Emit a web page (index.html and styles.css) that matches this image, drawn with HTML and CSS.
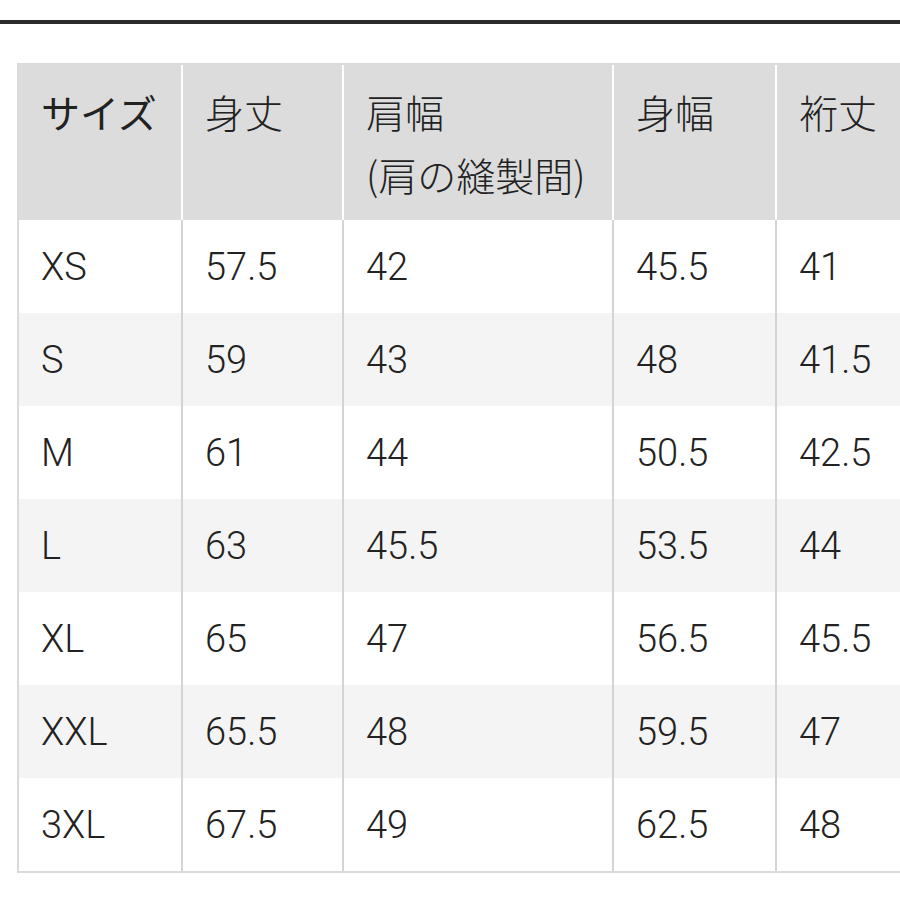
FILE: index.html
```html
<!DOCTYPE html>
<html lang="ja">
<head>
<meta charset="utf-8">
<title>サイズ表</title>
<link rel="stylesheet" href="styles.css">
</head>
<body>
<div class="topline"></div>
<table class="sizes">
  <thead>
    <tr>
      <th class="c1 strong">サイズ</th>
      <th class="c2">身丈</th>
      <th class="c3">肩幅<br>(肩の縫製間)</th>
      <th class="c4">身幅</th>
      <th class="c5">裄丈</th>
    </tr>
  </thead>
  <tbody>
    <tr><td>XS</td><td>57.5</td><td>42</td><td>45.5</td><td>41</td></tr>
    <tr><td>S</td><td>59</td><td>43</td><td>48</td><td>41.5</td></tr>
    <tr><td>M</td><td>61</td><td>44</td><td>50.5</td><td>42.5</td></tr>
    <tr><td>L</td><td>63</td><td>45.5</td><td>53.5</td><td>44</td></tr>
    <tr><td>XL</td><td>65</td><td>47</td><td>56.5</td><td>45.5</td></tr>
    <tr><td>XXL</td><td>65.5</td><td>48</td><td>59.5</td><td>47</td></tr>
    <tr><td>3XL</td><td>67.5</td><td>49</td><td>62.5</td><td>48</td></tr>
  </tbody>
</table>
</body>
</html>
```
FILE: styles.css
```css
html, body {
  margin: 0;
  padding: 0;
  overflow: hidden;
  background: #ffffff;
}
body {
  font-family: Roboto, "Noto Sans CJK JP", sans-serif;
  color: #222222;
}
.topline {
  height: 4px;
  margin-top: 20px;
  background: #2b2b2b;
}
.sizes {
  margin: 39px 0 0 17px;
  border-collapse: separate;
  border-spacing: 0;
  table-layout: fixed;
  width: 898px;
  border: 2px solid #dadada;
  border-right: none;
}
.sizes th,
.sizes td {
  box-sizing: border-box;
  text-align: left;
}
.sizes th {
  background: #dcdcdc;
  font-family: "Noto Sans CJK JP", sans-serif;
  font-weight: 300;
  font-size: 39px;
  line-height: 63px;
  height: 155px;
  vertical-align: top;
  padding: 15px 0 0 22px;
  color: #222222;
  white-space: nowrap;
}
.sizes th.strong {
  font-weight: 400;
}
.sizes th + th {
  border-left: 2px solid #ffffff;
}
.sizes .c1 { width: 162px; }
.sizes .c2 { width: 161px; }
.sizes .c3 { width: 270px; }
.sizes .c4 { width: 163px; }
.sizes .c5 { width: 142px; }
.sizes td {
  height: 93px;
  padding: 0 0 0 22px;
  font-size: 38px;
  font-weight: 300;
  vertical-align: middle;
  background: #ffffff;
}
.sizes td + td {
  border-left: 2px solid #d4d4d4;
}
.sizes tbody tr:nth-child(even) td {
  background: #f4f4f4;
}
```
